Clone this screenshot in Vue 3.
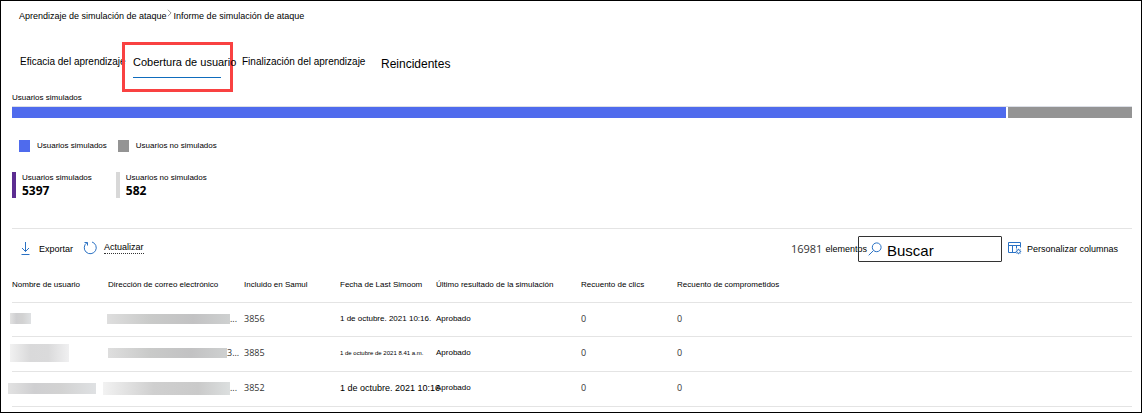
<script setup>
import { ref } from 'vue'

const search = ref('')
const tabs = [
  { label: 'Eficacia del aprendizaje', kind: 'first' },
  { label: 'Cobertura de usuario', kind: 'active' },
  { label: 'Finalización del aprendizaje', kind: 'third' },
  { label: 'Reincidentes', kind: 'large' },
]
const simulated = 5397
const notSimulated = 582
const simulatedShare = '88.75%'
const columns = [
  'Nombre de usuario',
  'Dirección de correo electrónico',
  'Incluido en Samul',
  'Fecha de Last Simoom',
  'Último resultado de la simulación',
  'Recuento de clics',
  'Recuento de comprometidos',
]
const rows = [
  { size: 'one', tail: '...', included: 3856, date: '1 de octubre. 2021 10:16.', result: 'Aprobado', clicks: 0, compromised: 0 },
  { size: 'two', tail: '3...', included: 3885, date: '1 de octubre de 2021 8.41 a.m.', result: 'Aprobado', clicks: 0, compromised: 0 },
  { size: 'three', tail: '...', included: 3852, date: '1 de octubre. 2021 10:16', result: 'Aprobado', clicks: 0, compromised: 0 },
]
</script>

<template>
  <main class="page">
    <nav class="crumbs" aria-label="Ruta">
      <a href="#">Aprendizaje de simulación de ataque</a>
      <svg class="chevron" viewBox="0 0 6 10" aria-hidden="true"><path d="M1 1l4 4-4 4" /></svg>
      <span>Informe de simulación de ataque</span>
    </nav>

    <div class="tabs" role="tablist">
      <button
        v-for="tab in tabs"
        :key="tab.label"
        type="button"
        role="tab"
        class="tab"
        :class="tab.kind"
        :aria-selected="tab.kind === 'active'"
      ><span>{{ tab.label }}</span></button>
    </div>

    <section class="summary">
      <h2 class="caption">Usuarios simulados</h2>
      <div class="bar">
        <div class="segment blue" :style="{ width: simulatedShare }"></div>
        <div class="segment rest"></div>
      </div>
      <div class="legend">
        <span class="key"><i class="swatch blue"></i>Usuarios simulados</span>
        <span class="key"><i class="swatch gray"></i>Usuarios no simulados</span>
      </div>
      <div class="stats">
        <div class="stat purple"><span>Usuarios simulados</span><strong>{{ simulated }}</strong></div>
        <div class="stat"><span>Usuarios no simulados</span><strong>{{ notSimulated }}</strong></div>
      </div>
    </section>

    <div class="toolbar">
      <button type="button" class="command export">
        <svg class="icon" viewBox="0 0 14 14" aria-hidden="true"><path d="M6.5 0v9.500M3 6l3.500 3.500L10 6M2.500 12.500h8" /></svg>
        <span>Exportar</span>
      </button>
      <button type="button" class="command refresh">
        <svg class="icon" viewBox="0 0 14 14" aria-hidden="true"><path d="M9 1a6 6 0 1 1-5 .7M1.500 1.500h3v3" /></svg>
        <span class="dotted">Actualizar</span>
      </button>
      <div class="count"><span class="number">16981</span><span class="items">elementos</span></div>
      <label class="search">
        <svg class="icon" viewBox="0 0 14 14" aria-hidden="true"><circle cx="8.7" cy="5.3" r="4.4" /><path d="M5.5 8.5L.7 13.3" /></svg>
        <input v-model="search" type="text" placeholder="Buscar" aria-label="Buscar" />
      </label>
      <button type="button" class="command columns">
        <svg class="icon" viewBox="0 0 14 14" aria-hidden="true">
          <path d="M8 10.500H.5v-10h12v5M.5 3.500h12M4.500 3.500v7M8.500 3.500v3" />
          <circle cx="10.500" cy="9.500" r="1.800" />
          <path d="M10.500 6.800v.9M10.500 11.300v.9M7.800 9.500h.9M12.300 9.500h.9M8.600 7.600l.6.6M11.800 10.800l.6.6M12.400 7.600l-.6.6M9.200 10.800l-.6.6" />
        </svg>
        <span>Personalizar columnas</span>
      </button>
    </div>

    <table class="grid">
      <colgroup>
        <col class="c-name" /><col class="c-mail" /><col class="c-short" /><col class="c-short" />
        <col class="c-result" /><col class="c-short" /><col />
      </colgroup>
      <thead>
        <tr><th v-for="column in columns" :key="column" scope="col">{{ column }}</th></tr>
      </thead>
      <tbody>
        <tr v-for="row in rows" :key="row.included" :class="row.size">
          <td><div class="mask name"></div></td>
          <td><div class="mail"><div class="mask address"></div><span>{{ row.tail }}</span></div></td>
          <td class="value">{{ row.included }}</td>
          <td class="date">{{ row.date }}</td>
          <td>{{ row.result }}</td>
          <td class="value">{{ row.clicks }}</td>
          <td class="value">{{ row.compromised }}</td>
        </tr>
      </tbody>
    </table>
  </main>
</template>

<style>
body {
  background: #fff;
}
</style>

<style scoped>
.page {
  box-sizing: border-box;
  min-height: 100vh;
  padding: 8px 9px 5px 11px;
  border: 1px solid #000;
  background: #fff;
  color: #000;
  font: 8px/12px "Liberation Sans", Arial, sans-serif;
  white-space: nowrap;
}
button {
  margin: 0;
  padding: 0;
  border: 0;
  background: none;
  color: inherit;
  font: inherit;
}
svg {
  flex: none;
  fill: none;
  stroke: #2b72c4;
}
.crumbs {
  display: flex;
  height: 14px;
  padding-left: 7px;
  font-size: 9px;
  line-height: 14px;
}
.crumbs a {
  color: inherit;
  text-decoration: none;
}
.chevron {
  width: 5px;
  height: 8px;
  margin-right: 2px;
  stroke: #777;
}
.tabs {
  display: flex;
  height: 50px;
  margin-top: 19px;
  font-size: 10px;
  line-height: 40px;
}
.tab {
  display: flex;
  align-items: flex-start;
  box-sizing: border-box;
}
.first {
  width: 110px;
  padding-left: 8px;
}
.active {
  width: 111px;
  padding-left: 8px;
  border: 3px solid #f94141;
  font-size: 11px;
  line-height: 34px;
}
.active span {
  width: 88px;
  height: 32px;
  border-bottom: 1px solid #0f6cbd;
}
.third {
  width: 148px;
  padding-left: 9px;
}
.large {
  font-size: 12px;
  line-height: 44px;
}
.caption {
  margin: 0;
  font: inherit;
}
.bar {
  display: flex;
  gap: 2px;
  height: 11px;
  margin-top: 2px;
  border-top: 1px solid #dcdfe6;
}
.blue {
  background: #4f6bed;
}
.gray,
.rest {
  background: #949494;
}
.rest {
  flex: 1;
}
.legend {
  display: flex;
  gap: 11px;
  margin-top: 21px;
  padding-left: 7px;
  line-height: 14px;
}
.key {
  display: flex;
  align-items: center;
  gap: 7px;
}
.swatch {
  width: 11px;
  height: 12px;
}
.stats {
  display: flex;
  gap: 24px;
  margin-top: 19px;
}
.stat {
  display: flex;
  flex-direction: column;
  padding-left: 6px;
  border-left: 4px solid #d8d8d8;
}
.purple {
  border-color: #5c2d91;
}
.stat strong {
  font: 700 12px/14px "Open Sans", "Noto Sans", sans-serif;
}
.toolbar {
  display: flex;
  align-items: center;
  margin-top: 30px;
  padding: 7px 14px 6px 7px;
  border-top: 1px solid #e4e4e4;
  font-size: 9px;
  line-height: 14px;
}
.command {
  display: flex;
  align-items: center;
}
.icon {
  width: 14px;
  height: 14px;
}
.export {
  gap: 6px;
  margin-right: 10px;
}
.refresh {
  gap: 7px;
  padding-bottom: 3px;
}
.dotted {
  line-height: 11px;
  border-bottom: 1px dotted #333;
}
.count {
  display: flex;
  gap: 3px;
  margin-left: auto;
  width: 67px;
}
.number {
  font: 11px/14px "Open Sans", "Noto Sans", sans-serif;
  color: #333;
}
.search {
  display: flex;
  align-items: center;
  gap: 5px;
  box-sizing: border-box;
  width: 144px;
  height: 26px;
  padding: 0 9px;
  border: 1px solid #333;
  border-radius: 1px;
}
.search input {
  min-width: 0;
  width: 100%;
  padding: 3px 0 0;
  border: 0;
  outline: 0;
  background: none;
  color: #000;
  font: 15px/20px "Liberation Sans", Arial, sans-serif;
}
.search input::placeholder {
  color: #000;
  opacity: 1;
}
.columns {
  gap: 5px;
  margin-left: 6px;
}
.grid {
  width: 100%;
  table-layout: fixed;
  border-collapse: collapse;
}
.c-name,
.c-short {
  width: 96px;
}
.c-mail {
  width: 136px;
}
.c-result {
  width: 145px;
}
th,
td {
  height: 34px;
  padding: 0;
  border-bottom: 1px solid #e4e4e4;
  font-weight: 400;
  text-align: left;
}
td {
  height: 32px;
  padding-bottom: 2px;
}
.one td {
  height: 31px;
}
.value,
.mail {
  color: #333;
  font: 9px/12px "Open Sans", "Noto Sans", sans-serif;
}
.two .date {
  font-size: 6px;
}
.three .date {
  font-size: 9px;
}
.mail {
  display: flex;
  align-items: center;
}
.mask {
  background: linear-gradient(90deg, #e2e2e2, #cfcfd1 30%, #d2d2d2 60%, #dfe1e3);
}
.name {
  width: 21px;
  height: 11px;
  margin-left: -2px;
}
.two .name {
  width: 59px;
  height: 18px;
  background: linear-gradient(90deg, #f1f1f1, #d9d9da 35%, #dadadb 65%, #f0f0f1);
}
.three .name {
  width: 88px;
  height: 11px;
  margin-left: -4px;
}
.address {
  width: 123px;
  height: 10px;
  margin-left: -1px;
  background: linear-gradient(90deg, #dedede, #c9cac9 35%, #c2c2c3 70%, #ced0d0);
}
.two .address {
  width: 119px;
  margin-left: 0;
}
.three .address {
  width: 127px;
  height: 13px;
  margin-left: -5px;
  background: linear-gradient(90deg, #f2f2f2, #cfcfcf 40%, #cacaca 75%, #dcdfdf);
}
</style>
